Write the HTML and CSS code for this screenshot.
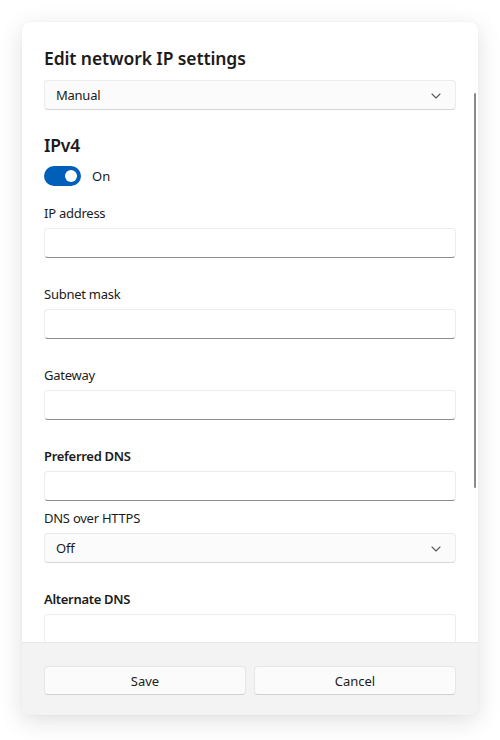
FILE: index.html
```html
<!DOCTYPE html>
<html lang="en">
<head>
<meta charset="utf-8">
<title>Edit network IP settings</title>
<link rel="stylesheet" href="styles.css">
</head>
<body>
<div class="dialog">
  <div class="content">
    <h1 class="title">Edit network IP settings</h1>
    <div class="select">
      <span>Manual</span>
      <svg class="chev" width="10" height="6" viewBox="0 0 10 6"><path d="M1 1l4 4 4-4" fill="none" stroke="#5c5c5c" stroke-width="1.1" stroke-linecap="round" stroke-linejoin="round"/></svg>
    </div>
    <h2 class="section">IPv4</h2>
    <div class="toggle-row">
      <span class="toggle"><span class="knob"></span></span>
      <span class="toggle-label">On</span>
    </div>
    <div class="field">
      <label class="label">IP address</label>
      <div class="input"></div>
    </div>
    <div class="field">
      <label class="label">Subnet mask</label>
      <div class="input"></div>
    </div>
    <div class="field">
      <label class="label">Gateway</label>
      <div class="input"></div>
    </div>
    <div class="field">
      <label class="label bold">Preferred DNS</label>
      <div class="input"></div>
    </div>
    <div class="field tight">
      <label class="label">DNS over HTTPS</label>
      <div class="select">
        <span>Off</span>
        <svg class="chev" width="10" height="6" viewBox="0 0 10 6"><path d="M1 1l4 4 4-4" fill="none" stroke="#5c5c5c" stroke-width="1.1" stroke-linecap="round" stroke-linejoin="round"/></svg>
      </div>
    </div>
    <div class="field">
      <label class="label bold">Alternate DNS</label>
      <div class="input"></div>
    </div>
    <div class="scrollbar"></div>
  </div>
  <div class="footer">
    <button class="btn">Save</button>
    <button class="btn">Cancel</button>
  </div>
</div>
</body>
</html>
```
FILE: styles.css
```css
* { box-sizing: border-box; }
html, body { margin: 0; padding: 0; background: #ffffff; }
body {
  font-family: "Noto Sans", "Open Sans", sans-serif;
  color: #1b1b1b;
  width: 500px;
  height: 740px;
  overflow: hidden;
}
.dialog {
  margin: 22px 0 0 22px;
  width: 456px;
  height: 693px;
  border-radius: 8px;
  background: #ffffff;
  box-shadow: 0 6px 24px rgba(0,0,0,0.13), 0 0 2px rgba(0,0,0,0.06);
  display: flex;
  flex-direction: column;
  overflow: hidden;
}
.content {
  position: relative;
  flex: 1;
  overflow: hidden;
  padding: 22px 22px 0 22px;
}
.title {
  margin: 0;
  font-size: 17.5px;
  font-weight: 600;
  line-height: 28px;
  letter-spacing: -0.1px;
}
.select {
  margin-top: 8px;
  height: 30px;
  border: 1px solid #ebebeb;
  border-bottom-color: #d6d6d6;
  border-radius: 4px;
  background: #fbfbfb;
  display: flex;
  align-items: center;
  justify-content: space-between;
  padding: 0 14px 0 11px;
  font-size: 13px;
  letter-spacing: -0.25px;
}
.chev { display: block; margin-top: 1px; }
.section {
  margin: 21px 0 0 0;
  font-size: 17.5px;
  font-weight: 600;
  line-height: 28px;
  letter-spacing: -0.2px;
}
.toggle-row {
  margin-top: 7px;
  display: flex;
  align-items: center;
  gap: 11px;
  height: 20px;
}
.toggle {
  width: 37px;
  height: 20px;
  border-radius: 10px;
  background: #005fb8;
  display: flex;
  align-items: center;
  justify-content: flex-end;
  padding-right: 4px;
}
.knob {
  width: 12px;
  height: 12px;
  border-radius: 50%;
  background: #ffffff;
}
.toggle-label { font-size: 13px; line-height: 20px; }
.field { margin-top: 17px; }
.field + .field { margin-top: 26px; }
.field.tight { margin-top: 7px; }
.label {
  display: block;
  font-size: 13px;
  line-height: 20px;
  letter-spacing: -0.25px;
  margin-bottom: 5px;
}
.label.bold { font-weight: 600; letter-spacing: -0.3px; }
.field .select { margin-top: 0; }
.input {
  height: 30px;
  border: 1px solid #ececec;
  border-bottom: 1px solid #8c8c8c;
  border-radius: 4px;
  background: #ffffff;
}
.scrollbar {
  position: absolute;
  left: 452px;
  top: 71px;
  width: 2px;
  height: 395px;
  border-radius: 1px;
  background: #8a8a8a;
}
.footer {
  flex: none;
  height: 73px;
  background: #f3f3f3;
  border-top: 1px solid #e8e8e8;
  padding: 23px 22px 0 22px;
  display: grid;
  grid-template-columns: 1fr 1fr;
  column-gap: 8px;
  align-items: start;
}
.btn {
  height: 29px;
  border: 1px solid #e6e6e6;
  border-bottom-color: #d0d0d0;
  border-radius: 4px;
  background: #fbfbfb;
  font-family: inherit;
  font-size: 13px;
  color: #1b1b1b;
  padding: 0;
}
```
